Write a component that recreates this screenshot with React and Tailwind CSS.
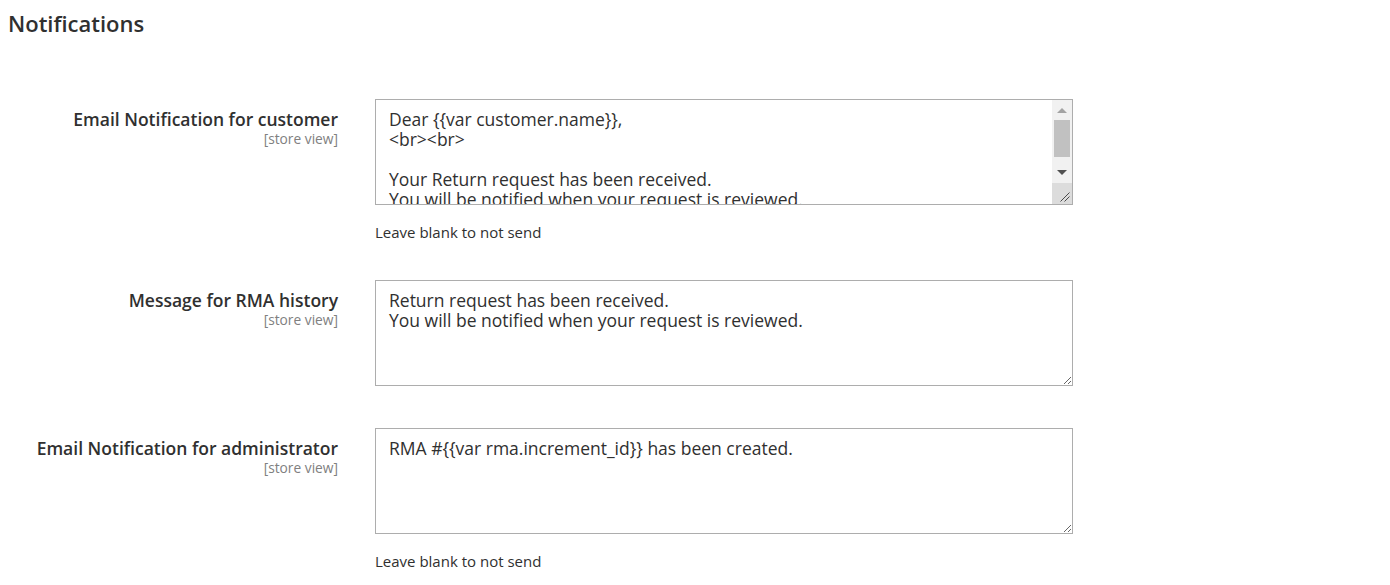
import React from 'react';

const customerEmail = `Dear {{var customer.name}},
<br><br>

Your Return request has been received.
You will be notified when your request is reviewed.
<br><br>

Thank you,
{{var store.frontend_name}}`;

// fake classic scrollbar, the headless browser only draws overlay bars
const ScrollBar = () => (
  <div className="absolute top-px right-px bottom-px w-[20px] flex flex-col bg-[#f1f1f1]">
    <div className="h-[20px] flex items-center justify-center">
      <div className="w-0 h-0 border-l-[5px] border-r-[5px] border-b-[5px] border-l-transparent border-r-transparent border-b-[#a3a3a3]" />
    </div>
    <div className="mx-[2px] h-[37px] bg-[#c1c1c1]" />
    <div className="flex-1 flex items-end justify-center pb-[8px]">
      <div className="w-0 h-0 border-l-[5px] border-r-[5px] border-t-[5px] border-l-transparent border-r-transparent border-t-[#505050]" />
    </div>
    <div className="h-[21px] bg-[#dcdcdc] relative">
      <svg className="absolute right-[2px] bottom-[2px]" width="12" height="12" viewBox="0 0 12 12">
        <path d="M11.5 2.5 L2.5 11.5 M11.5 6.5 L6.5 11.5" stroke="#4a4a4a" strokeWidth="1" />
      </svg>
    </div>
  </div>
);

const Field = ({ label, value, note, scroll, className = '' }) => {
  return (
    <div className={`flex ${className}`}>
      <div className="w-[338px] shrink-0 text-right pt-[10px]">
        <div className="text-[17.5px] leading-[20px] font-semibold text-[#303030]">{label}</div>
        <div className="text-[13.75px] leading-[20px] text-[#808080]">[store view]</div>
      </div>
      <div className="ml-[37px]">
        <div className="relative w-[698px]">
          <textarea
            defaultValue={value}
            className="block w-[698px] h-[106px] border border-[#adadad] rounded-none px-[13px] pt-[9px] pb-0 text-[17.5px] leading-[20px] text-[#303030] bg-white outline-none overflow-hidden font-['Open_Sans',sans-serif]"
          />
          {scroll && <ScrollBar />}
        </div>
        {note && (
          <p className="mt-[17px] text-[15px] leading-[20px] text-[#303030]">{note}</p>
        )}
      </div>
    </div>
  );
};

export default function App() {
  return (
    <div className="w-[1390px] h-[585px] bg-white font-['Open_Sans',sans-serif] overflow-hidden">
      <h1 className="pl-2 pt-[10px] text-[22px] leading-[26px] font-semibold text-[#303030]">Notifications</h1>
      <div className="mt-[63px]">
        <Field
          label="Email Notification for customer"
          value={customerEmail}
          note="Leave blank to not send"
          scroll
        />
        <Field
          className="mt-[38px]"
          label="Message for RMA history"
          value={`Return request has been received.\nYou will be notified when your request is reviewed.`}
        />
        <Field
          className="mt-[42px]"
          label="Email Notification for administrator"
          value="RMA #{{var rma.increment_id}} has been created."
          note="Leave blank to not send"
        />
      </div>
    </div>
  );
}
